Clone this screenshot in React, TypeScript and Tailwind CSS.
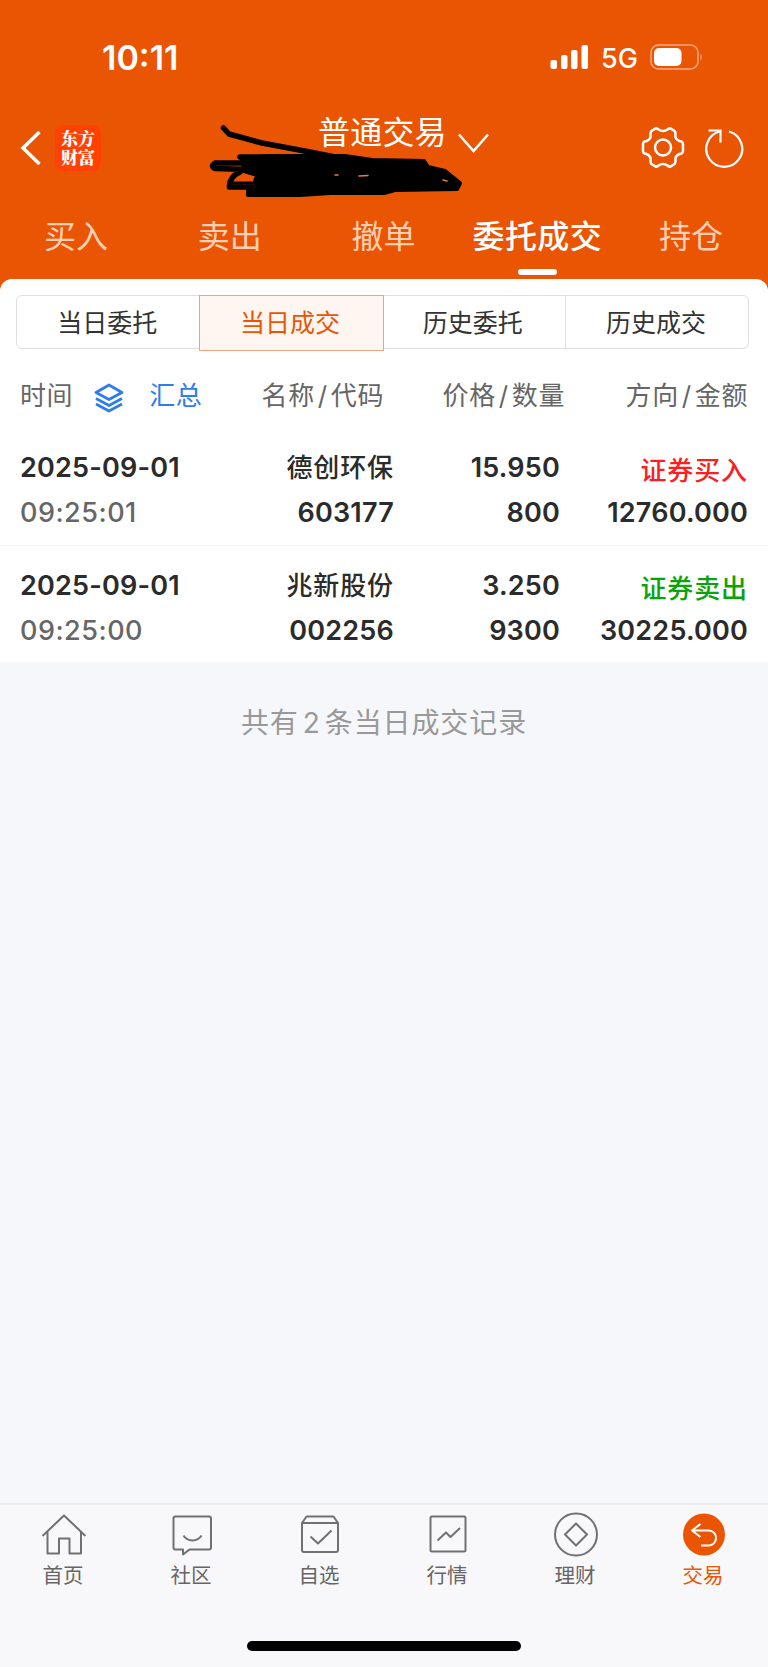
import type { ReactNode } from "react";
import clsx from "clsx";

interface Deal {
  date: string;
  time: string;
  name: string;
  code: string;
  price: string;
  quantity: string;
  side: "buy" | "sell";
  amount: string;
}

const deals: Deal[] = [
  {
    date: "2025-09-01",
    time: "09:25:01",
    name: "德创环保",
    code: "603177",
    price: "15.950",
    quantity: "800",
    side: "buy",
    amount: "12760.000",
  },
  {
    date: "2025-09-01",
    time: "09:25:00",
    name: "兆新股份",
    code: "002256",
    price: "3.250",
    quantity: "9300",
    side: "sell",
    amount: "30225.000",
  },
];

const tabs = ["买入", "卖出", "撤单", "委托成交", "持仓"];
const filters = ["当日委托", "当日成交", "历史委托", "历史成交"];

const navItems: { label: string; icon: ReactNode }[] = [
  {
    label: "首页",
    icon: (
      <>
        <path d="M1.5 25 23 4.5 44.500 25" />
        <path d="M6.500 21v21.500h11.500V27.500h10.500v15H40V21" />
      </>
    ),
  },
  {
    label: "社区",
    icon: (
      <>
        <path d="M6 5.500h34q2 0 2 2v29q0 2-2 2H20.500l-6.500 5v-5H6.500q-2 0-2-2v-29q0-2 2-2Z" />
        <path d="M14.500 24.500c4 6.500 14 6.500 18 0" />
      </>
    ),
  },
  {
    label: "自选",
    icon: (
      <>
        <path d="M5 12 9.500 5.500h27L41 12v27q0 2-2 2H7q-2 0-2-2Z" />
        <path d="M5 12h36M13.500 25.500l7.500 7 13.500-13" />
      </>
    ),
  },
  {
    label: "行情",
    icon: (
      <>
        <rect x="5.500" y="5.500" width="35" height="35" rx="1.500" />
        <path d="M12.500 29.500 21 21.500l4.500 4.500 9.500-9" />
      </>
    ),
  },
  {
    label: "理财",
    icon: (
      <>
        <circle cx="23" cy="23.500" r="21" />
        <path d="M23 12.500 34 23.500 23 34.500 12 23.500Z" />
      </>
    ),
  },
  {
    label: "交易",
    icon: (
      <>
        <circle cx="23" cy="23.500" r="21" fill="#ea5504" stroke="none" />
        <path stroke="#fff" d="M19.500 13 11 19.500l8.500 6.500M11 19.500h16.500c10 0 10 15 0 15H20" />
      </>
    ),
  },
];

function StatusBar() {
  return (
    <div className="flex h-[114px] items-center justify-between pr-16 pl-[102px] text-white">
      <span className="mt-0.5 text-[34px] leading-none font-semibold">10:11</span>
      <div className="flex items-center">
        <svg width="40" height="26" viewBox="0 0 40 26" fill="#fff">
          <rect x="0.500" y="16" width="6.500" height="9" rx="2" />
          <rect x="11" y="11" width="6.500" height="14" rx="2" />
          <rect x="21" y="6" width="6.500" height="19" rx="2" />
          <rect x="31.500" y="1" width="6.500" height="24" rx="2" />
        </svg>
        <span className="mt-0.5 ml-[11px] w-[37px] text-[27px] leading-none font-medium">5G</span>
        <svg className="ml-3" width="54" height="26" viewBox="0 0 54 26" fill="none">
          <rect x="1" y="1" width="47" height="24" rx="7.500" stroke="#f6a882" strokeWidth="1.500" />
          <rect x="4" y="4" width="27.500" height="18" rx="5" fill="#fff" />
          <path d="M50.500 9q2.500 4 0 8Z" fill="#f6a882" />
        </svg>
      </div>
    </div>
  );
}

function Header() {
  return (
    <div className="relative flex h-[84px] items-start text-white">
      <svg className="mt-4 ml-5" width="22" height="36" viewBox="0 0 22 36" fill="none" stroke="#fff" strokeWidth="3.500">
        <path d="M19.500 2 3 18l16.500 16" />
      </svg>
      <div className="mt-[11px] ml-[13px] h-[46px] w-[46px] rounded-lg bg-[#ff4203] pt-[3px] text-center font-['Noto_Serif_CJK_SC','Noto_Sans_CJK_SC',sans-serif] text-[17px] leading-[19px] font-black whitespace-pre-line">
        {"东方\n财富"}
      </div>
      <div className="ml-[217px] flex">
        <span className="mt-px w-[131px] text-[32px] leading-9 tracking-[0.200px] whitespace-nowrap">普通交易</span>
        <svg className="mt-[18px] ml-2" width="34" height="24" viewBox="0 0 34 24" fill="none" stroke="#fff" strokeWidth="2.500">
          <path d="M2 2.500 16.500 19 31 2.500" />
        </svg>
      </div>
      <svg className="mt-[11px] ml-[149px]" width="46" height="46" viewBox="0 0 46 46" fill="none" stroke="#fff" strokeWidth="2.500">
        <path d="M15.500 3.500Q17 3 18.500 4.500Q23 7.500 27.500 4.500Q29 3 30.500 3.500L34.500 6Q35.500 7 35.500 9Q34.500 14 39.500 16L41.500 16.500Q43 17.500 43 19V26Q43 27.500 41.500 28.500L39.500 29Q34.500 31 35.500 36Q35.500 38 34.500 39L30.500 41.500Q29 42 27.500 40.500Q23 37.500 18.500 40.500Q17 42 15.500 41.500L11.500 39Q10.500 38 10.500 36Q11.500 31 6.500 29L4.500 28.500Q3 27.500 3 26V19Q3 17.500 4.500 16.500L6.500 16Q11.500 14 10.500 9Q10.500 7 11.500 6Z" />
        <circle cx="23" cy="22.500" r="8" />
      </svg>
      <svg className="mt-[13px] ml-[17px]" width="44" height="44" viewBox="0 0 44 44" fill="none" stroke="#fff" strokeWidth="2.200">
        <path d="M26 4.500A18 18 0 1 1 16.500 4.500" />
        <path d="M5.500 3.500h12v12" />
      </svg>
      {/* hand-drawn redaction over the account number */}
      <svg className="absolute top-0 left-[200px]" width="270" height="84" viewBox="200 114 270 84" stroke="#000" strokeLinecap="round" strokeLinejoin="round">
        <path d="M223.500 128 229 134 262 143 310 152 340 158" fill="none" strokeWidth="5.500" />
        <path d="M240 157H270M245 163H215Q210 166 215 168.500L250 169.500M240 172Q229 177 229.500 187H252" fill="none" strokeWidth="5.500" />
        <path d="M231 183H256" fill="none" strokeWidth="3" />
        <path d="M242 158 270 156 330 156 345 156 372 160 424 161 428 167 445 171 460 183 457 189 395 190 384 193 330 193 300 195 248 195V191L258 189 255 182 257 175 244 171Z" fill="#000" strokeWidth="4" />
        <path d="M335 175h3M359 176l9-.5M443 180l4 1" fill="none" stroke="#ea7a40" strokeWidth="1.500" />
      </svg>
    </div>
  );
}

function Tabs() {
  return (
    <div className="-ml-px grid h-[81px] grid-cols-5 text-center text-[32px] leading-[77px]">
      {tabs.map((tab) => {
        const active = tab === "委托成交";
        return (
          <div key={tab} className={clsx("flex flex-col items-center whitespace-nowrap", active ? "font-medium tracking-[0.400px] text-white" : "text-[#ffd0b3]")}>
            <span className="h-[71px]">{tab}</span>
            {active && <span className="h-1.5 w-[39px] rounded-sm bg-white" />}
          </div>
        );
      })}
    </div>
  );
}

function Filters() {
  return (
    <div className="mr-[19px] ml-4 grid h-[54px] grid-cols-4 rounded-md border border-[#dcdfe6] text-center text-[25px] leading-[54px] text-[#333]">
      {filters.map((filter, i) => (
        <div
          key={filter}
          className={clsx(
            "pr-0.5",
            i === 1 && "-m-px border border-[#efa37d] bg-[#fff5f1] text-[#ea5504]",
            i === 3 && "border-l border-[#dcdfe6]"
          )}
        >
          {filter}
        </div>
      ))}
    </div>
  );
}

function HeadCell({ label, className }: { label: string; className: string }) {
  const [first, second] = label.split("/");
  return (
    <span className={clsx("text-right", className)}>
      {first}
      <span className="mx-[3px]">/</span>
      {second}
    </span>
  );
}

function TableHead() {
  return (
    <div className="flex h-[79px] items-center px-5 pt-3.5 text-[26px] tracking-[0.600px] text-[#666]">
      <div className="flex w-[190px] items-center">
        <span>时间</span>
        <svg className="mt-1 ml-[21px]" width="30" height="30" viewBox="0 0 30 30" fill="none" stroke="#2f7de9" strokeWidth="2.800" strokeLinejoin="round">
          <path d="M15 2 28 9.500 15 16.500 2 9.500Z" />
          <path d="M2 15.500 15 22.500 28 15.500M2 21 15 28 28 21" />
        </svg>
        <span className="ml-[25px] text-[#2f7de9]">汇总</span>
      </div>
      <HeadCell label="名称/代码" className="w-[174px]" />
      <HeadCell label="价格/数量" className="w-[181px]" />
      <HeadCell label="方向/金额" className="w-[183px]" />
    </div>
  );
}

function DealRow({ deal }: { deal: Deal }) {
  return (
    <div className="flex h-[118px] border-b border-[#f3f4f6] px-5 pt-[17px] text-[27px] leading-[45px] font-semibold tracking-[0.200px] text-[#2b2b2b] last:h-[116px] last:border-b-0">
      <div className="w-[190px]">
        <div>{deal.date}</div>
        <div className="font-medium tracking-[0.500px] text-[#666]">{deal.time}</div>
      </div>
      <div className="w-[184px] text-right">
        <div className="text-[26px] font-medium tracking-[0.900px]">{deal.name}</div>
        <div>{deal.code}</div>
      </div>
      <div className="w-[166px] text-right">
        <div>{deal.price}</div>
        <div>{deal.quantity}</div>
      </div>
      <div className="w-[188px] text-right">
        <div className={clsx("h-[45px] pt-[3px] text-[26px] font-medium tracking-[0.900px]", deal.side === "buy" ? "text-[#f9201f]" : "text-[#0ba30b]")}>
          {deal.side === "buy" ? "证券买入" : "证券卖出"}
        </div>
        <div>{deal.amount}</div>
      </div>
    </div>
  );
}

function BottomNav() {
  return (
    <div className="flex h-[164px] flex-col items-center border-t-2 border-[#ebecee] bg-[#f8f8fb]">
      <div className="grid w-full grid-cols-6">
        {navItems.map((item) => (
          <div key={item.label} className={clsx("flex flex-col items-center pt-1.5 text-[20.500px] leading-[34px]", item.label === "交易" ? "text-[#ea5504]" : "text-[#666]")}>
            <svg width="46" height="48" viewBox="0 0 46 48" fill="none" stroke="#707070" strokeWidth="2" strokeLinejoin="round">
              {item.icon}
            </svg>
            <span className="pr-0.5">{item.label}</span>
          </div>
        ))}
      </div>
      <div className="mt-12 h-2.5 w-[274px] rounded-full bg-black" />
    </div>
  );
}

export default function App() {
  return (
    <div className="flex h-[1667px] w-[768px] flex-col overflow-hidden bg-[#f6f7fa] font-['Inter','Noto_Sans_CJK_SC',sans-serif]">
      <div className="bg-[#ea5504]">
        <StatusBar />
        <Header />
        <Tabs />
        <div className="rounded-t-xl bg-white pt-4">
          <Filters />
          <TableHead />
        </div>
      </div>
      <div className="bg-white">
        {deals.map((deal) => (
          <DealRow key={deal.code} deal={deal} />
        ))}
      </div>
      <div className="flex-1 pt-10 text-center text-[28px] tracking-[0.900px] text-[#999]">
        共有<span className="mx-1">2</span>条当日成交记录
      </div>
      <BottomNav />
    </div>
  );
}
